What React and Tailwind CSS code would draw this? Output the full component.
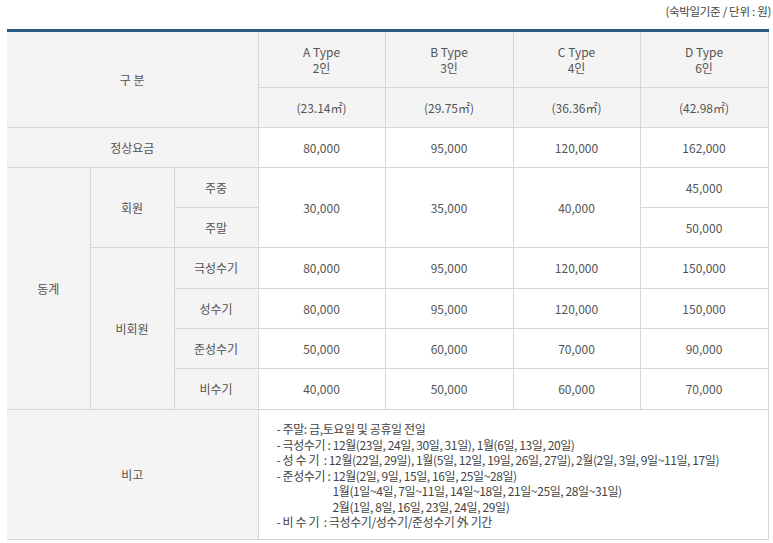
import React from 'react'

const font = { fontFamily: '"Noto Sans CJK KR", "Noto Sans", sans-serif' }

const types = [
  { name: 'A Type', people: '2인', area: '(23.14㎡)', normal: '80,000' },
  { name: 'B Type', people: '3인', area: '(29.75㎡)', normal: '95,000' },
  { name: 'C Type', people: '4인', area: '(36.36㎡)', normal: '120,000' },
  { name: 'D Type', people: '6인', area: '(42.98㎡)', normal: '162,000' },
]

const nonMember = [
  { label: '극성수기', h: 'h-[41px]', prices: ['80,000', '95,000', '120,000', '150,000'] },
  { label: '성수기', h: 'h-[40px]', prices: ['80,000', '95,000', '120,000', '150,000'] },
  { label: '준성수기', h: 'h-[40px]', prices: ['50,000', '60,000', '70,000', '90,000'] },
  { label: '비수기', h: 'h-[41px]', prices: ['40,000', '50,000', '60,000', '70,000'] },
]

const th = 'bg-[#f4f4f4] border border-[#d6d6d6] font-normal text-center align-middle'
const td = 'bg-white border border-[#d6d6d6] text-center align-middle'

export default function App() {
  return (
    <div className="w-[773px] h-[543px] bg-white text-[#555] text-[12px] overflow-hidden" style={font}>
      <div className="h-[29px] pr-[2px] pt-[3px] text-right text-[11.5px] text-[#444] tracking-[-0.3px]">
        (숙박일기준 / 단위 : 원)
      </div>
      <table className="ml-[7px] w-[761px] table-fixed border-collapse border-t-[3px] border-t-[#2b5d84]">
        <colgroup>
          <col className="w-[83px]" />
          <col className="w-[84px]" />
          <col className="w-[84px]" />
          <col className="w-[127px]" />
          <col className="w-[128px]" />
          <col className="w-[127px]" />
          <col className="w-[128px]" />
        </colgroup>
        <tbody>
          <tr className="h-[57px]">
            <th colSpan={3} rowSpan={2} className={th + ' border-l-0 border-t-0'}>구 분</th>
            {types.map((t) => (
              <th key={t.name} className={th + ' border-t-0 leading-[16px]'}>
                {t.name}
                <br />
                {t.people}
              </th>
            ))}
          </tr>
          <tr className="h-[40px]">
            {types.map((t) => (
              <th key={t.name} className={th}>{t.area}</th>
            ))}
          </tr>
          <tr className="h-[40px]">
            <th colSpan={3} className={th + ' border-l-0'}>정상요금</th>
            {types.map((t) => (
              <td key={t.name} className={td}>{t.normal}</td>
            ))}
          </tr>
          <tr className="h-[40px]">
            <th rowSpan={6} className={th + ' border-l-0'}>동계</th>
            <th rowSpan={2} className={th}>회원</th>
            <th className={th}>주중</th>
            <td rowSpan={2} className={td}>30,000</td>
            <td rowSpan={2} className={td}>35,000</td>
            <td rowSpan={2} className={td}>40,000</td>
            <td className={td}>45,000</td>
          </tr>
          <tr className="h-[40px]">
            <th className={th}>주말</th>
            <td className={td}>50,000</td>
          </tr>
          {nonMember.map((row, i) => (
            <tr key={row.label} className={row.h}>
              {i === 0 && (
                <th rowSpan={4} className={th}>비회원</th>
              )}
              <th className={th}>{row.label}</th>
              {row.prices.map((p, j) => (
                <td key={j} className={td}>{p}</td>
              ))}
            </tr>
          ))}
          <tr className="h-[130px]">
            <th colSpan={3} className={th + ' border-l-0'}>비고</th>
            <td colSpan={4} className={td + ' text-left pl-[18px] text-[#444] tracking-[-0.4px]'}>
              <div className="leading-[15.6px] pt-[2px]">
                <div>- 주말: 금,토요일 및 공휴일 전일</div>
                <div>- 극성수기 : 12월(23일, 24일, 30일, 31일), 1월(6일, 13일, 20일)</div>
                <div>- 성 수 기&nbsp;&nbsp;: 12월(22일, 29일), 1월(5일, 12일, 19일, 26일, 27일), 2월(2일, 3일, 9일~11일, 17일)</div>
                <div>- 준성수기 : 12월(2일, 9일, 15일, 16일, 25일~28일)</div>
                <div className="pl-[56px]">1월(1일~4일, 7일~11일, 14일~18일, 21일~25일, 28일~31일)</div>
                <div className="pl-[56px]">2월(1일, 8일, 16일, 23일, 24일, 29일)</div>
                <div>- 비 수 기&nbsp;&nbsp;: 극성수기/성수기/준성수기 外 기간</div>
              </div>
            </td>
          </tr>
        </tbody>
      </table>
    </div>
  )
}
